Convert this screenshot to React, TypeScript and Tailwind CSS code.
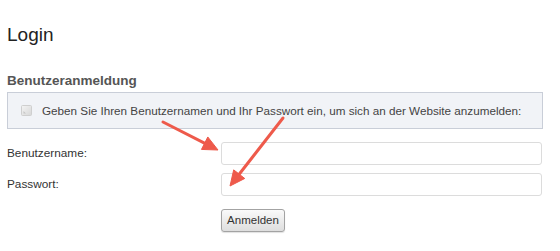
const ARROWS = [
  { x1: 163, y1: 122, x2: 218, y2: 150 },
  { x1: 283, y1: 118, x2: 230, y2: 186 },
];

function Arrow({ x1, y1, x2, y2 }: { x1: number; y1: number; x2: number; y2: number }) {
  const dx = x2 - x1;
  const dy = y2 - y1;
  const len = Math.hypot(dx, dy);
  const ux = dx / len;
  const uy = dy / len;
  const headLen = 15;
  const headW = 7;
  const bx = x2 - ux * headLen;
  const by = y2 - uy * headLen;
  const pts = `${x2},${y2} ${bx - uy * headW},${by + ux * headW} ${bx + uy * headW},${by - ux * headW}`;
  return (
    <g>
      <line x1={x1} y1={y1} x2={bx + ux * 2} y2={by + uy * 2} stroke="#ee5a4b" strokeWidth={3} strokeLinecap="round" />
      <polygon points={pts} fill="#ee5a4b" stroke="#ee5a4b" strokeWidth={1} strokeLinejoin="round" />
    </g>
  );
}

export default function App() {
  return (
    <div className="relative w-[560px] h-[251px] overflow-hidden bg-white font-['Liberation_Sans',Arial,sans-serif] text-[#333]">
      <div className="pl-[7px] pr-[17px] pt-[24px]">
        <h1 className="text-[19px] leading-[22px] text-[#222]">Login</h1>

        <h2 className="mt-[27px] text-[13.5px] leading-[16px] font-bold text-[#555]">Benutzeranmeldung</h2>

        <div className="mt-[3px] h-[37px] flex items-center border border-[#c9ced8] bg-[#f1f3f7] pl-[13px]">
          <svg width="11" height="11" viewBox="0 0 11 11" className="shrink-0">
            <defs>
              <linearGradient id="ic" x1="0" y1="0" x2="1" y2="1">
                <stop offset="0" stopColor="#f4f4f4" />
                <stop offset="1" stopColor="#d6d6d6" />
              </linearGradient>
            </defs>
            <rect x="0.5" y="0.5" width="10" height="10" rx="1" fill="url(#ic)" stroke="#cfcfcf" />
            <path d="M2.5 8.5 L2.5 6 L5 8.5 Z" fill="#c4c4c4" />
          </svg>
          <span className="ml-[10px] text-[11.7px] leading-[15px] text-[#444]">
            Geben Sie Ihren Benutzernamen und Ihr Passwort ein, um sich an der Website anzumelden:
          </span>
        </div>

        <div className="mt-[13px] grid grid-cols-[214px_1fr] gap-y-[8px] items-center text-[11.8px] text-[#333]">
          <label>Benutzername:</label>
          <input className="h-[23px] w-[321px] rounded-[3px] border border-[#dcdcdc] bg-white outline-none" />
          <label>Passwort:</label>
          <input type="password" className="h-[23px] w-[321px] rounded-[3px] border border-[#dcdcdc] bg-white outline-none" />
          <div />
          <div className="mt-[5px]">
            <button className="h-[23px] w-[64px] rounded-[3px] border border-[#a3a3a3] bg-gradient-to-b from-[#fafafa] to-[#dedede] text-[11.5px] text-[#333] shadow-[0_1px_1px_rgba(0,0,0,0.12)]">
              Anmelden
            </button>
          </div>
        </div>
      </div>

      <svg className="pointer-events-none absolute inset-0" width="560" height="251">
        {ARROWS.map((a, i) => (
          <Arrow key={i} {...a} />
        ))}
      </svg>
    </div>
  );
}
